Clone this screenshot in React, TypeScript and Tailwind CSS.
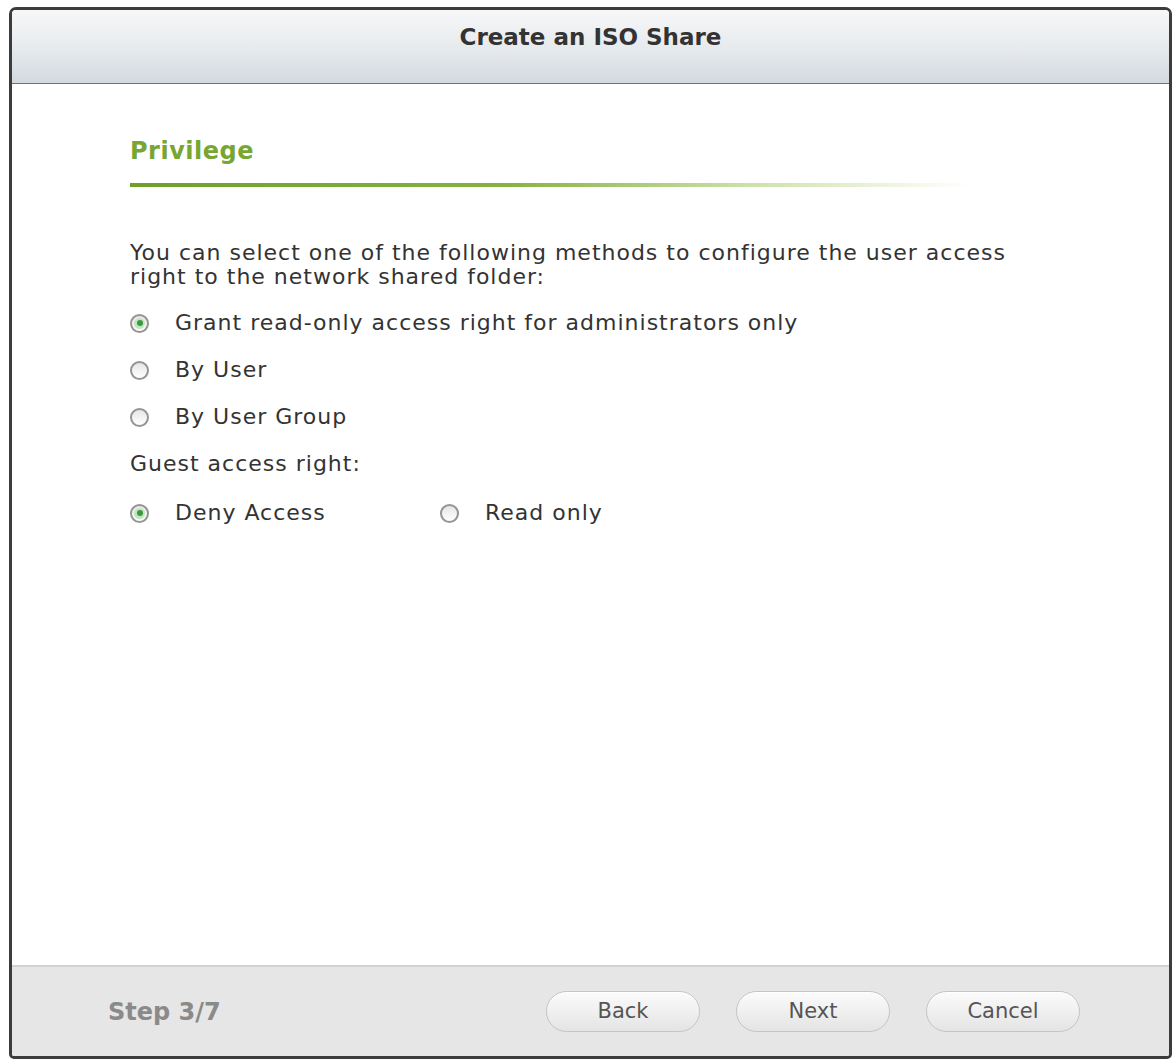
import React from "react";

function Radio({ checked }: { checked?: boolean }) {
  return (
    <span className="relative flex h-[19px] w-[19px] shrink-0 items-center justify-center rounded-full border-2 border-[#959595] bg-[linear-gradient(180deg,#e6e6e6,#ffffff)]">
      {checked && (
        <span className="flex h-[11px] w-[11px] items-center justify-center rounded-full bg-[#c4e6bd]">
          <span className="h-[6px] w-[6px] rounded-full bg-[#3a9a3f]" />
        </span>
      )}
    </span>
  );
}

function Option({ checked, label, className = "" }: { checked?: boolean; label: string; className?: string }) {
  return (
    <div className={`flex items-center gap-[26px] ${className}`}>
      <Radio checked={checked} />
      <span>{label}</span>
    </div>
  );
}

function Btn({ label }: { label: string }) {
  return (
    <button className="flex h-[41px] w-[154px] items-center justify-center rounded-full border border-[#c4c4c4] bg-[linear-gradient(180deg,#fbfbfb,#e4e4e4)] text-[21px] text-[#555] shadow-[inset_0_1px_0_#fff]">
      {label}
    </button>
  );
}

export default function App() {
  return (
    <div
      className="h-[1062px] w-[1176px] bg-white pl-[9px] pt-[7px]"
      style={{ fontFamily: '"DejaVu Sans", Verdana, sans-serif' }}
    >
      <div className="flex h-[1052px] w-[1163px] flex-col overflow-hidden rounded-t-[7px] rounded-b-[5px] border-[3px] border-[#3c3c3c]">
        <div className="flex h-[74px] shrink-0 items-start justify-center border-b border-[#6f7377] bg-[linear-gradient(180deg,#f6f7f8_0%,#e8ebee_50%,#d3d9df_100%)] pt-[12px]">
          <span className="text-[23px] font-bold leading-[30px] text-[#333]">Create an ISO Share</span>
        </div>
        <div className="flex-1 bg-white pl-[118px] pt-[52px] text-[22px] tracking-[1px] text-[#333]">
          <div className="text-[24px] font-bold leading-[30px] tracking-[0.5px] text-[#78a632]">Privilege</div>
          <div className="mt-[17px] h-[4px] w-[838px] bg-[linear-gradient(90deg,#6f9f2a_0%,#86b340_45%,#cfe2ad_75%,rgba(255,255,255,0)_100%)]" />
          <div className="mt-[54px] w-[920px] leading-[24px]">
            You can select one of the following methods to configure the user access right to the network shared folder:
          </div>
          <div className="mt-[22px] flex flex-col gap-[23px] leading-[24px]">
            <Option checked label="Grant read-only access right for administrators only" />
            <Option label="By User" />
            <Option label="By User Group" />
            <div>Guest access right:</div>
            <div className="mt-[2px] flex items-center">
              <Option checked label="Deny Access" className="w-[310px]" />
              <Option label="Read only" />
            </div>
          </div>
        </div>
        <div className="flex h-[91px] shrink-0 items-center border-t-2 border-[#d2d2d2] bg-[#e6e6e6] pl-[96px] pr-[89px]">
          <span className="text-[24px] font-bold text-[#8a8a8a]">Step 3/7</span>
          <div className="ml-auto flex gap-[36px]">
            <Btn label="Back" />
            <Btn label="Next" />
            <Btn label="Cancel" />
          </div>
        </div>
      </div>
    </div>
  );
}
